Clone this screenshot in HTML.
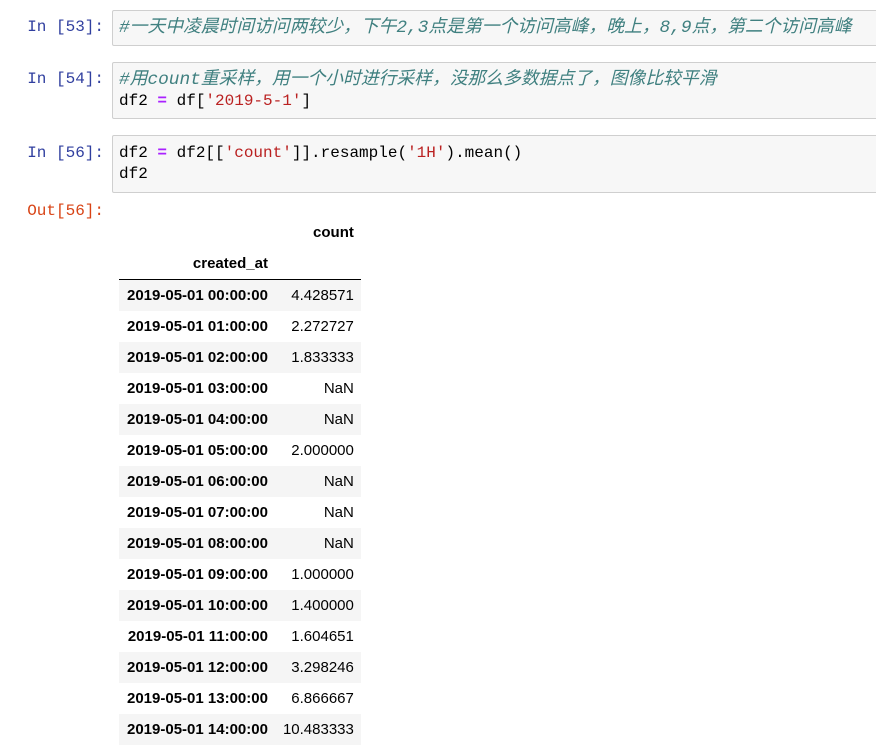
<!DOCTYPE html>
<html><head><meta charset="utf-8"><style>
body{margin:0;background:#fff;width:876px;height:749px;overflow:hidden;position:relative;font-family:"Liberation Mono","Noto Sans CJK SC",monospace;}
.p{position:absolute;left:0;width:104px;text-align:right;color:#303F9F;font-size:16px;}
.o{color:#D84315;}
.c{position:absolute;left:112px;width:780px;background:#f7f7f7;border:1px solid #cfcfcf;border-radius:2px;box-sizing:border-box;padding:7px 6px;font-size:16px;line-height:21px;color:#000;white-space:pre;}
.cm{color:#408080;font-style:italic;font-size:17.8px;}
.s{color:#BA2121;}
.k{color:#AA22FF;font-weight:bold;}
table{position:absolute;left:119px;top:217px;border-collapse:collapse;font-family:"Liberation Sans",Arial,sans-serif;font-size:15px;}
td,th{padding:0 7px 0 8px;height:31px;text-align:right;}
td{min-width:68px;}
th{font-weight:bold;}
thead tr:last-child th{border-bottom:1px solid #000;}
tbody tr:nth-child(odd){background:#f5f5f5;}
</style></head><body>
<div class="p" style="top:18px">In [53]:</div>
<div class="c" style="top:10px;height:36px"><span class="cm">#一天中凌晨时间访问两较少，下午2,3点是第一个访问高峰，晚上，8,9点，第二个访问高峰</span></div>
<div class="p" style="top:70px">In [54]:</div>
<div class="c" style="top:62px;height:57px"><span class="cm">#用count重采样，用一个小时进行采样，没那么多数据点了，图像比较平滑</span>
df2 <span class="k">=</span> df[<span class="s">'2019-5-1'</span>]</div>
<div class="p" style="top:144px">In [56]:</div>
<div class="c" style="top:135px;height:58px">df2 <span class="k">=</span> df2[[<span class="s">'count'</span>]].resample(<span class="s">'1H'</span>).mean()
df2</div>
<div class="p o" style="top:202px">Out[56]:</div>
<table>
<thead><tr><th style="height:31px"></th><th>count</th></tr><tr><th style="height:30px">created_at</th><th></th></tr></thead>
<tbody>
<tr><th>2019-05-01 00:00:00</th><td>4.428571</td></tr>
<tr><th>2019-05-01 01:00:00</th><td>2.272727</td></tr>
<tr><th>2019-05-01 02:00:00</th><td>1.833333</td></tr>
<tr><th>2019-05-01 03:00:00</th><td>NaN</td></tr>
<tr><th>2019-05-01 04:00:00</th><td>NaN</td></tr>
<tr><th>2019-05-01 05:00:00</th><td>2.000000</td></tr>
<tr><th>2019-05-01 06:00:00</th><td>NaN</td></tr>
<tr><th>2019-05-01 07:00:00</th><td>NaN</td></tr>
<tr><th>2019-05-01 08:00:00</th><td>NaN</td></tr>
<tr><th>2019-05-01 09:00:00</th><td>1.000000</td></tr>
<tr><th>2019-05-01 10:00:00</th><td>1.400000</td></tr>
<tr><th>2019-05-01 11:00:00</th><td>1.604651</td></tr>
<tr><th>2019-05-01 12:00:00</th><td>3.298246</td></tr>
<tr><th>2019-05-01 13:00:00</th><td>6.866667</td></tr>
<tr><th>2019-05-01 14:00:00</th><td>10.483333</td></tr>
</tbody></table>
</body></html>
